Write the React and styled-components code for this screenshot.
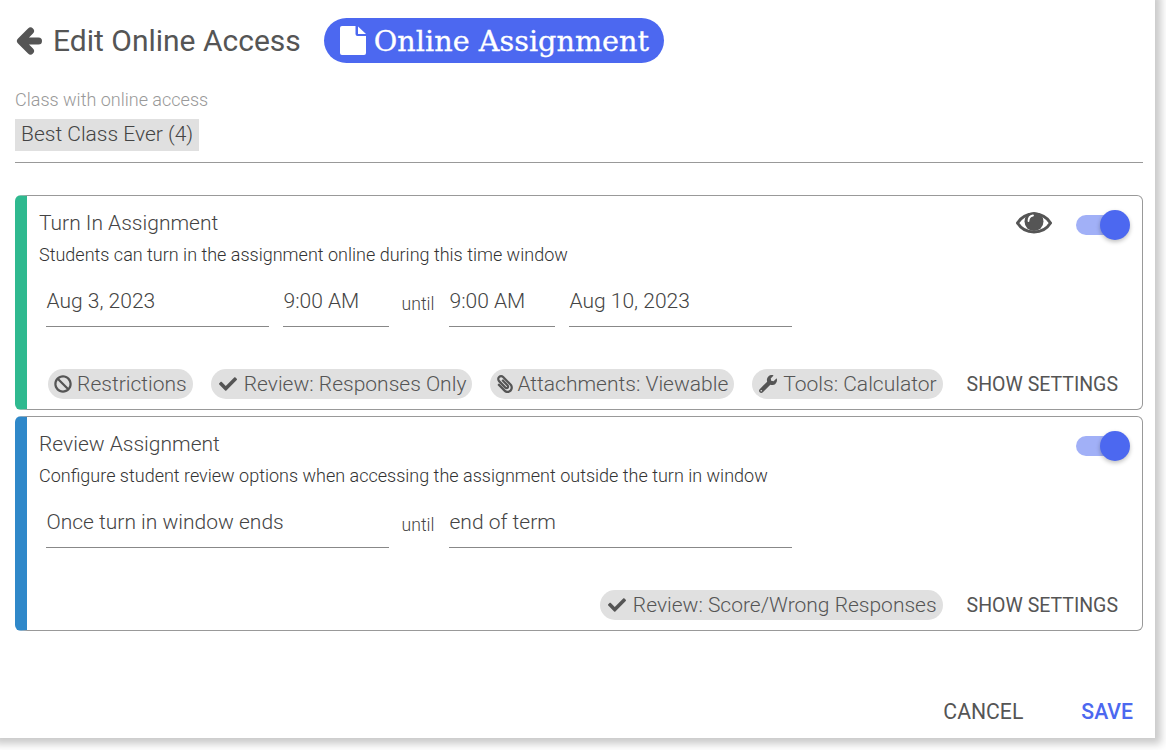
import React from 'react'
import styled, { createGlobalStyle } from 'styled-components'
import { FaBan, FaCheck, FaPaperclip, FaWrench } from 'react-icons/fa'

const GlobalStyle = createGlobalStyle`
  html, body {
    margin: 0;
    padding: 0;
    height: 750px;
    background: #fff;
    overflow: hidden;
  }
  body {
    font-family: Roboto, "Liberation Sans", sans-serif;
    color: #555;
  }
`

const Panel = styled.div`
  box-sizing: border-box;
  width: 1155px;
  height: 738px;
  padding: 18px 12px 0 15px;
  background: #fff;
  box-shadow: 0 0 8px 6px rgba(0, 0, 0, 0.21);
  display: flex;
  flex-direction: column;
`

const Header = styled.div`
  display: flex;
  align-items: center;
  height: 45px;
`

const BackArrow = styled.svg`
  width: 26px;
  height: 28px;
  margin: 0 11px 0 1px;
  flex: none;
`

const Title = styled.h1`
  margin: 0 23px 0 0;
  font-size: 30px;
  font-weight: 400;
  color: #555;
`

const TypePill = styled.div`
  display: flex;
  align-items: center;
  gap: 8px;
  height: 45px;
  padding: 0 15px 0 16px;
  border-radius: 23px;
  background: #4c68f0;
  color: #fff;
  font-family: "DejaVu Serif", "Liberation Serif", serif;
  font-size: 28.7px;
  white-space: nowrap;
  -webkit-text-stroke: 0.3px #fff;
`

const FileIcon = styled.svg`
  width: 26px;
  height: 29px;
  flex: none;
`

const ClassLabel = styled.div`
  margin-top: 27px;
  font-size: 18px;
  font-weight: 300;
  line-height: 20px;
  color: #999;
`

const ClassChip = styled.div`
  align-self: flex-start;
  margin-top: 9px;
  padding: 0 6px;
  height: 32px;
  line-height: 31px;
  font-size: 21px;
  font-weight: 300;
  color: #444;
  background: #e0e0e0;
`

const Divider = styled.hr`
  width: 100%;
  margin: 11px 0 32px;
  border: 0;
  height: 1px;
  background: #999;
`

const Cards = styled.div`
  display: flex;
  flex-direction: column;
  gap: 6px;
`

const Card = styled.section`
  box-sizing: border-box;
  height: 215px;
  padding: 14px 12px 10px 12px;
  border: 1px solid #999;
  border-left: 12px solid ${(p) => p.$accent};
  border-radius: 6px;
  display: flex;
  flex-direction: column;
`

const CardTop = styled.div`
  display: flex;
  justify-content: space-between;
  align-items: flex-start;
`

const CardTitle = styled.div`
  font-size: 21px;
  font-weight: 300;
  line-height: 26px;
  color: #444;
`

const CardText = styled.div`
  margin-top: 5px;
  font-size: 18px;
  font-weight: 300;
  line-height: 20px;
  color: #333;
`

const Controls = styled.div`
  display: flex;
  align-items: center;
  gap: 24px;
  height: 30px;
`

const EyeIcon = styled.svg`
  width: 36px;
  height: 26px;
  margin-top: -4px;
`

const Switch = styled.div`
  width: 54px;
  height: 30px;
  display: flex;
  align-items: center;
  position: relative;
`

const SwitchTrack = styled.div`
  width: 50px;
  height: 20px;
  border-radius: 10px;
  background: #a1b0f7;
`

const SwitchKnob = styled.div`
  position: absolute;
  right: 0;
  top: 0;
  width: 30px;
  height: 30px;
  border-radius: 50%;
  background: #4c68f0;
  box-shadow: 0 2px 4px rgba(0, 0, 0, 0.25);
`

const FieldRow = styled.div`
  display: flex;
  align-items: flex-end;
  margin-top: 20px;
  padding-left: 7px;
`

const Field = styled.div`
  box-sizing: border-box;
  width: ${(p) => p.$width}px;
  height: 42px;
  margin-right: ${(p) => p.$gap || 0}px;
  padding-left: 0.5px;
  border-bottom: 1px solid #888;
  font-size: 21px;
  font-weight: 300;
  line-height: 32px;
  color: #444;
`

const Until = styled.div`
  box-sizing: border-box;
  width: 60px;
  padding: 0 2px 11px 0;
  text-align: center;
  font-size: 17.6px;
  font-weight: 300;
  line-height: 24px;
  color: #444;
`

const CardFooter = styled.div`
  margin-top: auto;
  display: flex;
  justify-content: flex-end;
  align-items: center;
  gap: 18px;
`

const Chip = styled.div`
  display: flex;
  align-items: center;
  gap: 5px;
  height: 30px;
  padding: 0 6px;
  border-radius: 15px;
  background: #e0e0e0;
  font-size: 21px;
  font-weight: 300;
  color: #555;
  white-space: nowrap;
  svg {
    font-size: 18px;
    color: #555;
    flex: none;
  }
`

const CheckIcon = styled(FaCheck)`
  margin: 0 2px;
`

const ClipIcon = styled(FaPaperclip)`
  margin-right: -2px;
  transform: scaleX(-1);
`

const ToolIcon = styled(FaWrench)`
  margin-left: 1px;
  margin-right: 1px;
`

const TextButton = styled.button`
  border: 0;
  background: none;
  padding: 0;
  font-family: inherit;
  font-size: 19.5px;
  font-weight: 400;
  color: #555;
  white-space: nowrap;
`

const SettingsButton = styled(TextButton)`
  margin: 0 12px 0 6px;
`

const ActionButton = styled(TextButton)`
  font-size: 21.2px;
  font-weight: ${(p) => (p.$primary ? 500 : 400)};
  color: ${(p) => (p.$primary ? '#4c68f0' : '#555')};
`

const Actions = styled.div`
  display: flex;
  justify-content: flex-end;
  gap: 58px;
  margin-top: 68px;
  padding-right: 10px;
`

const Toggle = () => (
  <Switch>
    <SwitchTrack />
    <SwitchKnob />
  </Switch>
)

const App = () => {
  return (
    <Panel>
      <GlobalStyle />
      <Header>
        <BackArrow viewBox="0 0 26 28" fill="none" stroke="#555" strokeWidth="7" strokeLinecap="round" strokeLinejoin="round">
          <path d="M14.5 4 L4.5 14 L14.5 24 M5 14 H22.5" />
        </BackArrow>
        <Title>Edit Online Access</Title>
        <TypePill>
          <FileIcon viewBox="0 0 26 29" fill="#fff">
            <path d="M2 0 H15.5 V8 Q15.5 10 17.5 10 H26 V27 Q26 29 24 29 H2 Q0 29 0 27 V2 Q0 0 2 0 Z" />
            <path d="M18 0.5 L26 8 H18 Z" />
          </FileIcon>
          Online Assignment
        </TypePill>
      </Header>
      <ClassLabel>Class with online access</ClassLabel>
      <ClassChip>Best Class Ever (4)</ClassChip>
      <Divider />
      <Cards>
        <Card $accent="#2fb98f">
          <CardTop>
            <CardTitle>Turn In Assignment</CardTitle>
            <Controls>
              <EyeIcon viewBox="0 0 36 26">
                <path d="M1.5 13 C9 1 27 1 34.5 13 C27 25 9 25 1.5 13 Z" fill="none" stroke="#555" strokeWidth="3" />
                <circle cx="18" cy="11.5" r="9.5" fill="#555" />
                <path d="M12.5 11 C12.5 8 14.5 6 17 5.5" fill="none" stroke="#fff" strokeWidth="1.8" strokeLinecap="round" />
              </EyeIcon>
              <Toggle />
            </Controls>
          </CardTop>
          <CardText>Students can turn in the assignment online during this time window</CardText>
          <FieldRow>
            <Field $width={223} $gap={14}>Aug 3, 2023</Field>
            <Field $width={106}>9:00 AM</Field>
            <Until>until</Until>
            <Field $width={106} $gap={14}>9:00 AM</Field>
            <Field $width={223}>Aug 10, 2023</Field>
          </FieldRow>
          <CardFooter>
            <Chip><FaBan />Restrictions</Chip>
            <Chip><CheckIcon />Review: Responses Only</Chip>
            <Chip><ClipIcon />Attachments: Viewable</Chip>
            <Chip><ToolIcon />Tools: Calculator</Chip>
            <SettingsButton>SHOW SETTINGS</SettingsButton>
          </CardFooter>
        </Card>
        <Card $accent="#2f88c9">
          <CardTop>
            <CardTitle>Review Assignment</CardTitle>
            <Controls>
              <Toggle />
            </Controls>
          </CardTop>
          <CardText>Configure student review options when accessing the assignment outside the turn in window</CardText>
          <FieldRow>
            <Field $width={343}>Once turn in window ends</Field>
            <Until>until</Until>
            <Field $width={343}>end of term</Field>
          </FieldRow>
          <CardFooter>
            <Chip><CheckIcon />Review: Score/Wrong Responses</Chip>
            <SettingsButton>SHOW SETTINGS</SettingsButton>
          </CardFooter>
        </Card>
      </Cards>
      <Actions>
        <ActionButton>CANCEL</ActionButton>
        <ActionButton $primary>SAVE</ActionButton>
      </Actions>
    </Panel>
  )
}

export default App
